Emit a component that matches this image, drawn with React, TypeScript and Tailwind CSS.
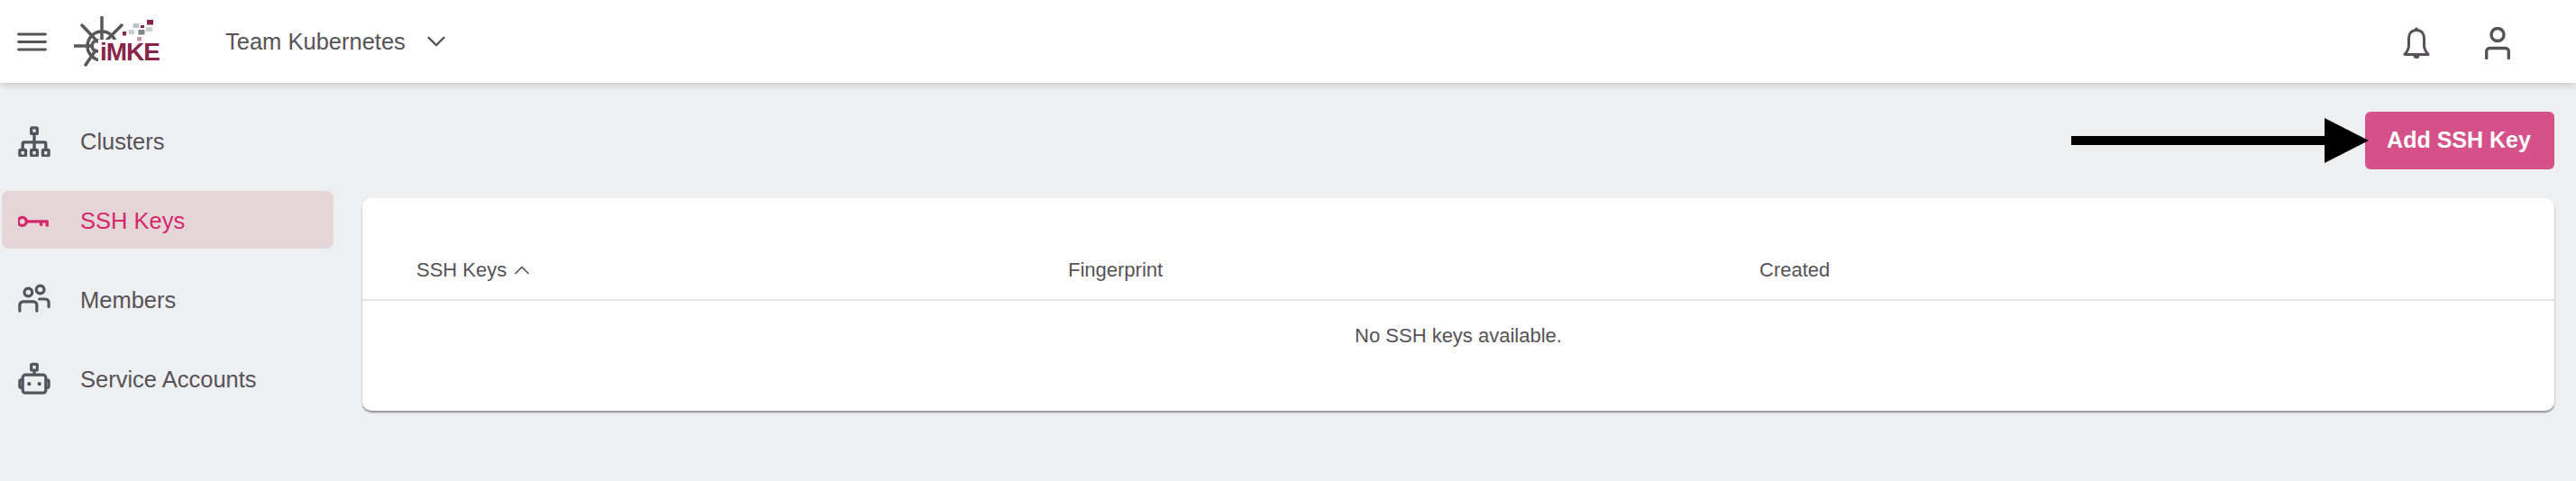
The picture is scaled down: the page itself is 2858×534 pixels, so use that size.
import { ChevronDown, ChevronUp } from "lucide-react";
import type { ReactNode } from "react";

const iconClass = "w-[36px] h-[36px] shrink-0";

function MenuIcon() {
  return (
    <svg viewBox="0 0 33 21" className="h-[21px] w-[33px] shrink-0" fill="none" stroke="#575258" strokeWidth="2.800" strokeLinecap="round">
      <path d="M1.500 2h30M1.500 10.500h30M1.500 19h30" />
    </svg>
  );
}

function ClustersIcon() {
  return (
    <svg viewBox="0 -2 38 38" className={iconClass} fill="none" stroke="#50565e" strokeWidth="3.500">
      <rect x="15.500" y="2" width="7" height="7" rx="1" />
      <path d="M19 9v19M5.500 28v-7.500a1.500 1.500 0 0 1 1.500-1.500h24a1.500 1.500 0 0 1 1.500 1.500V28" />
      <rect x="2" y="28" width="7" height="7" rx="1" />
      <rect x="15.500" y="28" width="7" height="7" rx="1" />
      <rect x="29" y="28" width="7" height="7" rx="1" />
    </svg>
  );
}

function KeyIcon() {
  return (
    <svg viewBox="2 0 38 38" className={iconClass} fill="none" stroke="#d3286a" strokeWidth="3.500">
      <circle cx="7" cy="21" r="4.800" />
      <path d="M12 21h25M36 20v7M29 20v6" />
    </svg>
  );
}

function MembersIcon() {
  return (
    <svg viewBox="0 0 38 38" className={iconClass} fill="none" stroke="#50565e" strokeWidth="3.400" strokeLinecap="round">
      <circle cx="12" cy="11" r="4.600" />
      <circle cx="26" cy="8" r="4.600" />
      <path d="M2 33v-7a4 4 0 0 1 4-4h12a4 4 0 0 1 4 4v7M25 19h7a4 4 0 0 1 4 4v5" />
    </svg>
  );
}

function RobotIcon() {
  return (
    <svg viewBox="0 -1 38 38" className={iconClass} fill="none" stroke="#50565e" strokeWidth="3.400">
      <rect x="15.500" y="1.500" width="7" height="7" rx="1" />
      <path d="M19 8.500v5" />
      <rect x="5.500" y="14" width="27" height="21" rx="3" />
      <path d="M5.500 20H3.500a1.500 1.500 0 0 0-1.500 1.500v6a1.500 1.500 0 0 0 1.500 1.500h2M32.500 20h2a1.500 1.500 0 0 1 1.500 1.500v6a1.500 1.500 0 0 1-1.500 1.500h-2" />
      <circle cx="13" cy="24.500" r="2.200" fill="#50565e" stroke="none" />
      <circle cx="25" cy="24.500" r="2.200" fill="#50565e" stroke="none" />
    </svg>
  );
}

function BellIcon() {
  return (
    <svg viewBox="0 0 30 36" className="h-[36px] w-[30px] shrink-0" fill="none" stroke="#575258" strokeWidth="3" strokeLinejoin="round">
      <path d="M15 3.500c-5.500 0-8.500 3.500-8.500 9v8c0 4-2 7-4.500 10h26c-2.500-3-4.500-6-4.500-10v-8c0-5.500-3-9-8.500-9z" />
      <circle cx="15" cy="2.500" r="2" fill="#575258" stroke="none" />
      <path d="M11.500 31.500a3.500 3.500 0 0 0 7 0z" fill="#575258" stroke="none" />
    </svg>
  );
}

function UserIcon() {
  return (
    <svg viewBox="0 0 28 36" className="h-[36px] w-[28px] shrink-0" fill="none" stroke="#575258" strokeWidth="3.400" strokeLinecap="round">
      <circle cx="14" cy="8.500" r="7" />
      <path d="M1.700 34.500V27a3.500 3.500 0 0 1 3.500-3.500h17.600a3.500 3.500 0 0 1 3.500 3.500v7.500" />
    </svg>
  );
}

function Logo() {
  return (
    <div className="relative h-[56px] w-[96px] shrink-0">
      <svg viewBox="0 0 96 56" className="absolute inset-0 h-full w-full" fill="none">
        <g stroke="#585858" strokeWidth="3.500" strokeLinecap="round">
          <circle cx="31" cy="33" r="16" />
          <circle cx="26" cy="33" r="6" />
          <path d="M31 1v26M9 10l17 18M53 10 35 28M1 33h19M13 54l11-16" />
        </g>
        {/* the wheel is cut away round the i */}
        <rect x="27" y="26" width="70" height="26" fill="#fff" />
        <rect x="81" y="4" width="7" height="5.500" fill="#872448" />
        <rect x="65.500" y="8" width="7" height="5" fill="#bcc3c6" />
        <rect x="74" y="10" width="4" height="3" fill="#872448" />
        <rect x="61" y="15" width="6" height="5" fill="#c8cdd0" />
        <rect x="71.500" y="15" width="7" height="5.500" fill="#7d8488" />
        <rect x="80" y="12" width="7" height="5" fill="#c8cdd0" />
        <rect x="54" y="17" width="4" height="4.500" fill="#872448" />
        <rect x="70" y="23" width="5" height="4.500" fill="#c79aaa" />
      </svg>
      <span className="absolute left-[29px] top-[21px] text-[28px] leading-[38px] font-bold tracking-[-1px] text-[#872448]">
        iMKE
      </span>
    </div>
  );
}

function NavItem({ icon, label, active }: { icon: ReactNode; label: string; active?: boolean }) {
  return (
    <div
      className={`ml-[2px] flex h-[64px] w-[368px] items-center gap-[33px] rounded-[8px] pl-[18px] text-[25.500px] ${
        active ? "bg-[#e5d5d9] text-[#d3286a]" : "text-[#565257]"
      }`}
    >
      {icon}
      <span className="pt-[2px]">{label}</span>
    </div>
  );
}

export default function App() {
  return (
    <div className="flex h-[534px] w-[2858px] flex-col overflow-hidden bg-[#eeeff1] font-['Liberation_Sans',sans-serif] text-[#565257]">
      <header className="relative z-10 flex h-[92px] shrink-0 items-center bg-white pl-[19px] pr-[73px] shadow-[0_2px_8px_rgba(0,0,0,0.18)]">
        <MenuIcon />
        <div className="ml-[30px]">
          <Logo />
        </div>
        <span className="ml-[72px] text-[25.500px]">Team Kubernetes</span>
        <ChevronDown className="ml-[17px] h-[34px] w-[34px]" strokeWidth={1.700} color="#575258" />
        <div className="ml-auto mt-[3px] flex items-center gap-[61px]">
          <BellIcon />
          <UserIcon />
        </div>
      </header>

      <div className="flex flex-1">
        <nav className="flex w-[402px] shrink-0 flex-col gap-[24px] pt-[32px]">
          <NavItem icon={<ClustersIcon />} label="Clusters" />
          <NavItem icon={<KeyIcon />} label="SSH Keys" active />
          <NavItem icon={<MembersIcon />} label="Members" />
          <NavItem icon={<RobotIcon />} label="Service Accounts" />
        </nav>

        <main className="w-[2432px] pt-[32px]">
          <div className="flex h-[64px] items-center justify-end">
            <svg viewBox="0 0 330 50" className="relative z-10 -mr-[4px] h-[50px] w-[330px]">
              <rect x="0" y="20" width="285" height="10" fill="#000" />
              <path d="M281 0 330 25 281 50Z" fill="#000" />
            </svg>
            <button
              type="button"
              className="h-[64px] w-[210px] rounded-[6px] bg-[#d65189] pr-[2px] text-[25px] font-bold text-white"
            >
              Add SSH Key
            </button>
          </div>

          <section className="mt-[32px] h-[236px] rounded-[10px] bg-white shadow-[0_2px_2px_rgba(0,0,0,0.4)]">
            <div className="flex h-[114px] items-end border-b-2 border-[#e4e4e4] pb-[16px] text-[22px]">
              <div className="flex w-[783px] items-center gap-[3px] pl-[60px]">
                SSH Keys
                <ChevronUp className="h-[28px] w-[28px]" strokeWidth={1.500} color="#575258" />
              </div>
              <div className="w-[767px]">Fingerprint</div>
              <div>Created</div>
            </div>
            <div className="pt-[22px] text-center text-[22px]">No SSH keys available.</div>
          </section>
        </main>
      </div>
    </div>
  );
}
